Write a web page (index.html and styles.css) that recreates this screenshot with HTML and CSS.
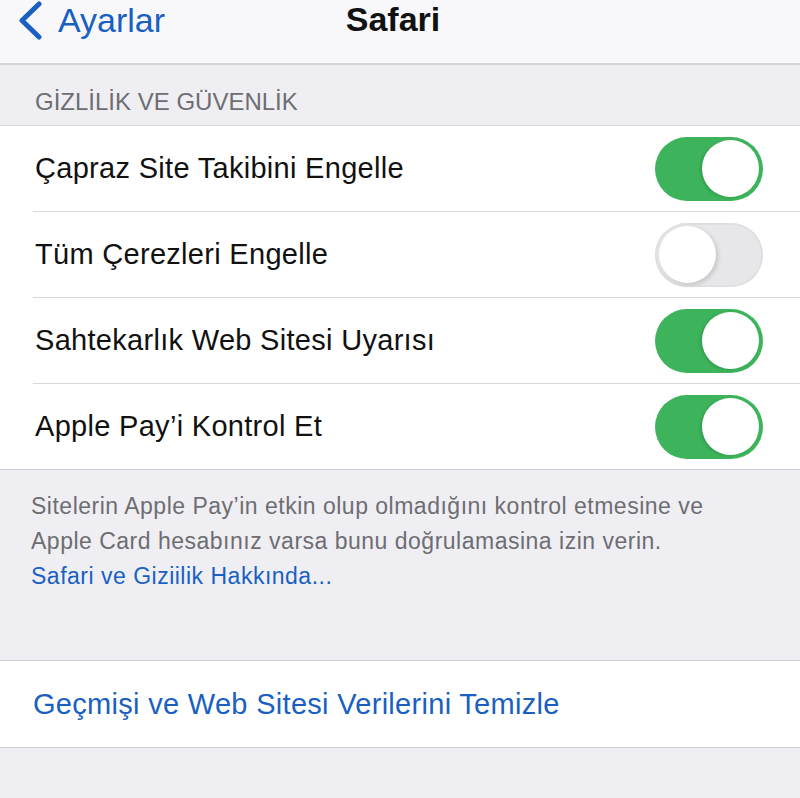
FILE: index.html
```html
<!DOCTYPE html>
<html lang="tr">
<head>
<meta charset="utf-8">
<title>Safari</title>
<link rel="stylesheet" href="styles.css">
</head>
<body>
<div class="screen">
  <header class="nav">
    <div class="nav-back">
      <svg class="chev" width="30" height="40" viewBox="0 0 30 40"><polyline points="25,4 8,20.5 25,37" fill="none" stroke="#1a5fc2" stroke-width="5" stroke-linecap="round" stroke-linejoin="round"/></svg>
      <span class="back-label">Ayarlar</span>
    </div>
    <div class="nav-title">Safari</div>
  </header>

  <div class="section-header">GİZLİLİK VE GÜVENLİK</div>

  <ul class="group">
    <li class="row"><span class="label">Çapraz Site Takibini Engelle</span><span class="switch on"><span class="knob"></span></span></li>
    <li class="row"><span class="label">Tüm Çerezleri Engelle</span><span class="switch off"><span class="knob"></span></span></li>
    <li class="row"><span class="label">Sahtekarlık Web Sitesi Uyarısı</span><span class="switch on"><span class="knob"></span></span></li>
    <li class="row"><span class="label">Apple Pay’i Kontrol Et</span><span class="switch on"><span class="knob"></span></span></li>
  </ul>

  <div class="section-footer">
    <p>Sitelerin Apple Pay’in etkin olup olmadığını kontrol etmesine ve<br>Apple Card hesabınız varsa bunu doğrulamasina izin verin.</p>
    <p class="link">Safari ve Giziilik Hakkında...</p>
  </div>

  <ul class="group group-action">
    <li class="row action"><span class="action-label">Geçmişi ve Web Sitesi Verilerini Temizle</span></li>
  </ul>
</div>
</body>
</html>
```

FILE: styles.css
```css
html, body {
  margin: 0;
  padding: 0;
}
body {
  background: #efeff3;
  font-family: "Liberation Sans", Arial, sans-serif;
  color: #111;
}
.screen {
  width: 800px;
  height: 798px;
  overflow: hidden;
  background: #efeff3;
}
.nav {
  height: 63px;
  background: #f8f8fa;
  border-bottom: 2px solid #d3d3d7;
  display: flex;
  align-items: flex-start;
  justify-content: center;
  padding-right: 14px;
  position: relative;
}
.nav-back {
  position: absolute;
  left: 14px;
  top: 0;
  display: flex;
  align-items: center;
  gap: 14px;
  height: 40px;
}
.chev {
  display: block;
}
.back-label {
  font-size: 34px;
  color: #1a5fc2;
  line-height: 38px;
}
.nav-title {
  font-size: 34px;
  font-weight: bold;
  line-height: 38px;
  color: #111;
}
.section-header {
  height: 61px;
  box-sizing: border-box;
  padding: 23px 0 0 35px;
  font-size: 24px;
  line-height: 28px;
  color: #6d6d72;
  border-bottom: 1px solid #d6d6da;
}
.group {
  list-style: none;
  margin: 0;
  padding: 0 0 0 33px;
  background: #fff;
  border-bottom: 1px solid #d0d0d4;
}
.row {
  display: flex;
  align-items: center;
  justify-content: space-between;
  height: 85px;
  padding-right: 37px;
  border-bottom: 1px solid #d9d9dc;
}
.row:last-child {
  border-bottom: none;
}
.label {
  font-size: 29px;
  letter-spacing: 0.3px;
  padding-left: 2px;
  color: #111;
}
.switch {
  width: 108px;
  height: 64px;
  border-radius: 32px;
  box-sizing: border-box;
  display: flex;
  align-items: center;
  padding: 0 4px;
}
.switch.on {
  background: #3db45b;
  justify-content: flex-end;
}
.switch.off {
  background: #e7e7ea;
  justify-content: flex-start;
  box-shadow: inset 0 0 0 2px #e0e0e3;
}
.knob {
  width: 57px;
  height: 57px;
  border-radius: 50%;
  background: #fff;
  box-shadow: -2px 1px 3px rgba(0,0,0,0.12);
}
.switch.off .knob {
  box-shadow: 2px 2px 4px rgba(0,0,0,0.15);
}
.section-footer {
  padding: 19px 0 0 31px;
  height: 191px;
  box-sizing: border-box;
  border-bottom: 1px solid #d0d0d4;
}
.section-footer p {
  margin: 0;
  font-size: 23px;
  letter-spacing: 0.5px;
  line-height: 35px;
  color: #6d6d72;
}
.section-footer p.link {
  color: #1a5fc2;
}
.group-action {
  padding-left: 33px;
}
.row.action {
  height: 86px;
}
.action-label {
  font-size: 29px;
  letter-spacing: 0.3px;
  color: #1a5fc2;
}
```
